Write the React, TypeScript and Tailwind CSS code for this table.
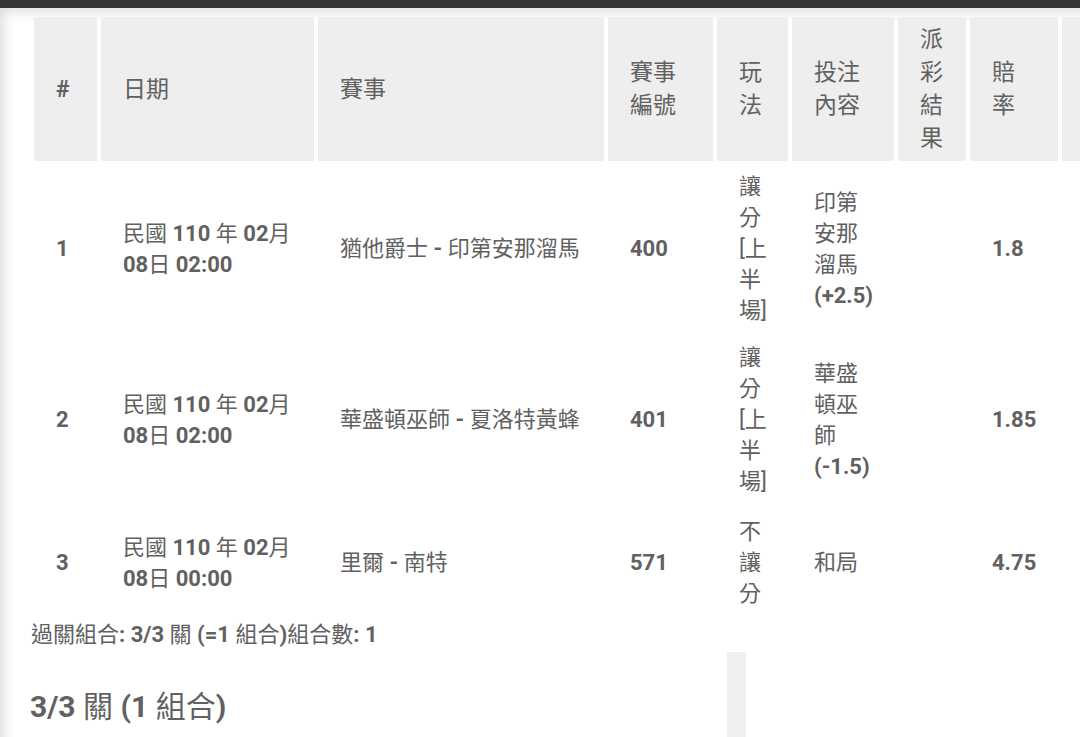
import React from "react"

const cols = [63, 213, 286, 105, 71, 102, 68, 88, 200]

const headers = ["#", "日期", "賽事", "賽事編號", "玩法", "投注內容", "派彩結果", "賠率", "可贏金額"]

const rows = [
    ["1", "民國 110 年 02月 08日 02:00", "猶他爵士 - 印第安那溜馬", "400", "讓分[上半場]", "印第安那溜馬 (+2.5)", "", "1.8", ""],
    ["2", "民國 110 年 02月 08日 02:00", "華盛頓巫師 - 夏洛特黃蜂", "401", "讓分[上半場]", "華盛頓巫師 (-1.5)", "", "1.85", ""],
    ["3", "民國 110 年 02月 08日 00:00", "里爾 - 南特", "571", "不讓分", "和局", "", "4.75", ""],
]

// latin runs are bold, CJK falls back to regular weight like on the phone
const cjk = /([\u2E80-\u9FFF\uF900-\uFAFF\uFF00-\uFFEF\[\]]+)/
const Mixed = ({ t }: { t: string }) => (
    <>
        {t.split(cjk).map((s, i) =>
            /[\u2E80-\u9FFF\uF900-\uFAFF\uFF00-\uFFEF\[\]]/.test(s)
                ? <span key={i} className="font-normal">{s}</span>
                : <span key={i}>{s}</span>
        )}
    </>
)

export default function App() {
    return (
        <div className="w-[1080px] h-[737px] overflow-hidden bg-white font-['Roboto','Noto_Sans_CJK_TC',sans-serif] text-[#616161]">
            <div className="h-[8px] bg-[#333438]" />
            <div className="relative h-[729px] pl-[30px] pt-[5px] shadow-[inset_9px_9px_12px_-5px_rgba(0,0,0,0.13)]">
                <table className="table-fixed border-separate border-spacing-1 w-[1236px]">
                    <colgroup>
                        {cols.map((w, i) => (
                            <col key={i} style={{ width: w }} />
                        ))}
                    </colgroup>
                    <thead>
                        <tr>
                            {headers.map((h, i) => (
                                <th key={i} className="bg-[#eeeeee] px-[22px] py-[6px] text-left align-middle text-[23px] leading-[33px] font-bold">
                                    {i === 8 ? <span className="invisible"><Mixed t={h} /></span> : <Mixed t={h} />}
                                </th>
                            ))}
                        </tr>
                    </thead>
                    <tbody>
                        {rows.map((r, ri) => (
                            <tr key={ri}>
                                {r.map((c, ci) => (
                                    <td key={ci} className={`px-[22px] ${ri === 2 ? 'pt-[9px] pb-[3px]' : 'py-[6px]'} align-middle text-[22px] leading-[31px] font-bold`}>
                                        <Mixed t={c} />
                                    </td>
                                ))}
                            </tr>
                        ))}
                    </tbody>
                </table>

                <p className="mt-[3px] pl-[1px] text-[22px] leading-[31px] font-bold">
                    <Mixed t="過關組合: 3/3 關 (=1 組合)組合數: 1" />
                </p>

                <h3 className="mt-[39px] text-[30px] leading-[36px] font-bold">
                    <Mixed t="3/3 關 (1 組合)" />
                </h3>

                <div className="absolute left-[727px] top-[644px] w-[19px] h-[100px] bg-[#efefef]" />
            </div>
        </div>
    )
}
